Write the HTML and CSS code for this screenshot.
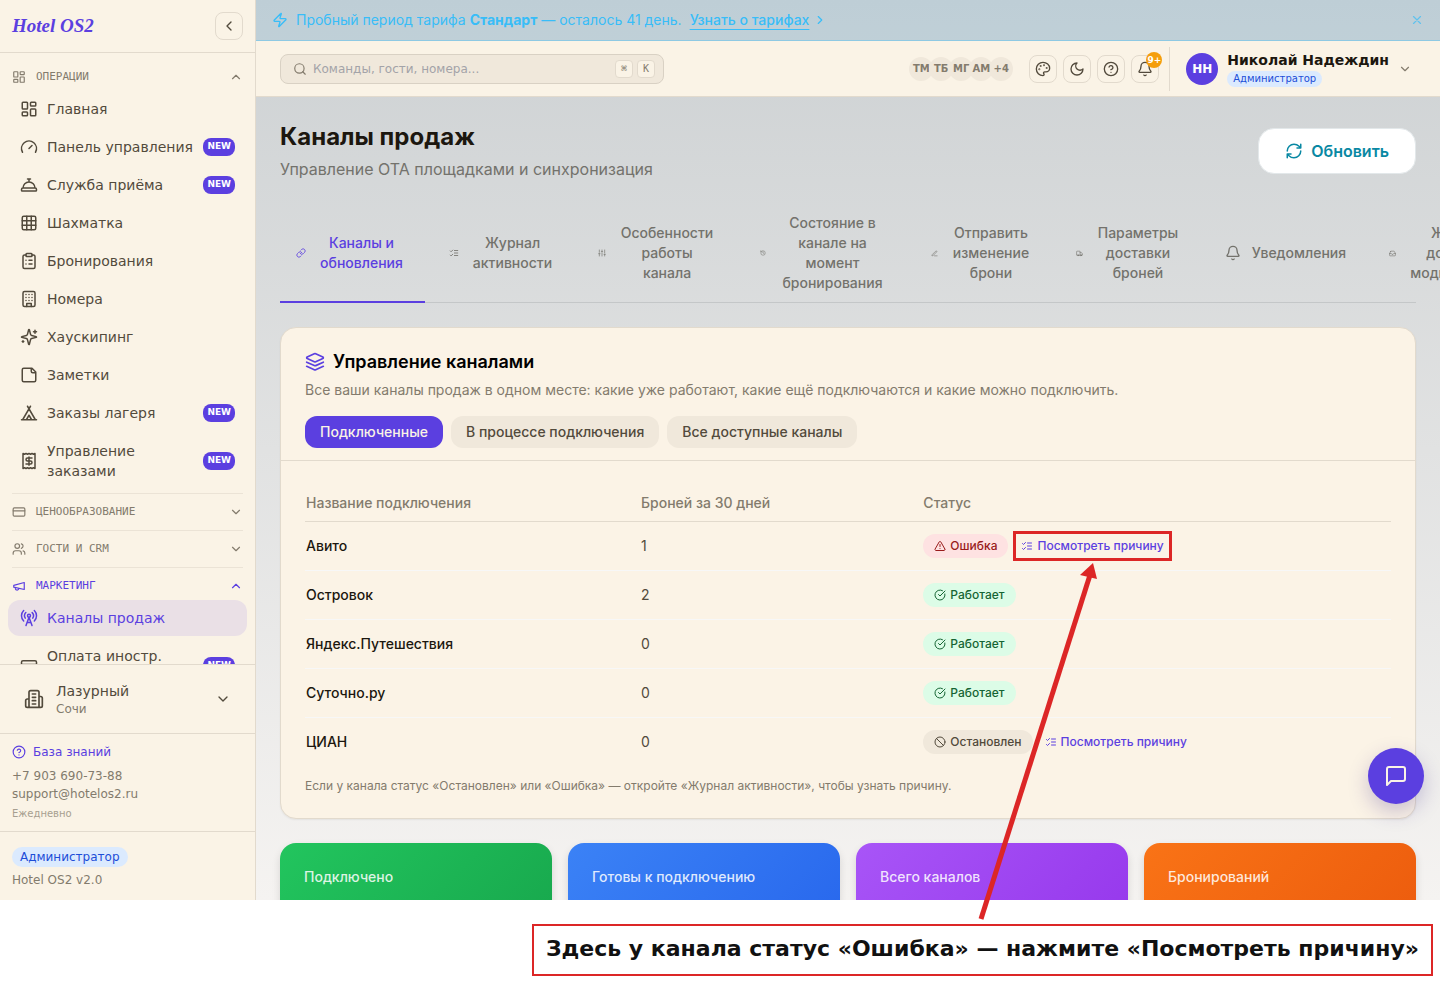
FILE: index.html
```html
<!DOCTYPE html>
<html lang="ru">
<head>
<meta charset="utf-8">
<title>Каналы продаж — Hotel OS2</title>
<link rel="stylesheet" href="styles.css">
</head>
<body>
<svg class="sprite" aria-hidden="true">
  <symbol id="dash" viewBox="0 0 24 24"><rect width="7" height="9" x="3" y="3" rx="1"/><rect width="7" height="5" x="14" y="3" rx="1"/><rect width="7" height="9" x="14" y="12" rx="1"/><rect width="7" height="5" x="3" y="16" rx="1"/></symbol>
  <symbol id="gauge" viewBox="0 0 24 24"><path d="m12 14 4-4M3.34 19a10 10 0 1 1 17.32 0"/></symbol>
  <symbol id="concierge" viewBox="0 0 24 24"><path d="M3 20a1 1 0 0 1-1-1v-1a2 2 0 0 1 2-2h16a2 2 0 0 1 2 2v1a1 1 0 0 1-1 1ZM20 16a8 8 0 1 0-16 0M12 4v4M10 4h4"/></symbol>
  <symbol id="grid" viewBox="0 0 24 24"><rect width="18" height="18" x="3" y="3" rx="2"/><path d="M3 9h18M3 15h18M9 3v18M15 3v18"/></symbol>
  <symbol id="clipboard" viewBox="0 0 24 24"><rect width="8" height="4" x="8" y="2" rx="1"/><path d="M16 4h2a2 2 0 0 1 2 2v14a2 2 0 0 1-2 2H6a2 2 0 0 1-2-2V6a2 2 0 0 1 2-2h2M12 11h4M12 16h4M8 11h.01M8 16h.01"/></symbol>
  <symbol id="building" viewBox="0 0 24 24"><rect width="16" height="20" x="4" y="2" rx="2"/><path d="M9 22v-4h6v4M8 6h.01M16 6h.01M12 6h.01M12 10h.01M12 14h.01M16 10h.01M16 14h.01M8 10h.01M8 14h.01"/></symbol>
  <symbol id="sparkles" viewBox="0 0 24 24"><path d="M9.937 15.5A2 2 0 0 0 8.5 14.063l-6.135-1.582a.5.5 0 0 1 0-.962L8.5 9.936A2 2 0 0 0 9.937 8.5l1.582-6.135a.5.5 0 0 1 .963 0L14.063 8.5A2 2 0 0 0 15.5 9.937l6.135 1.581a.5.5 0 0 1 0 .964L15.5 14.063a2 2 0 0 0-1.437 1.437l-1.582 6.135a.5.5 0 0 1-.963 0zM20 3v4M22 5h-4M4 17v2M5 18H3"/></symbol>
  <symbol id="note" viewBox="0 0 24 24"><path d="M16 3H5a2 2 0 0 0-2 2v14a2 2 0 0 0 2 2h14a2 2 0 0 0 2-2V8ZM15 3v4a2 2 0 0 0 2 2h4"/></symbol>
  <symbol id="tent" viewBox="0 0 24 24"><path d="M3.5 21 14 3M20.5 21 10 3M15.5 21 12 15l-3.500 6M2 21h20"/></symbol>
  <symbol id="receipt" viewBox="0 0 24 24"><path d="M4 2v20l2-1 2 1 2-1 2 1 2-1 2 1 2-1 2 1V2l-2 1-2-1-2 1-2-1-2 1-2-1-2 1ZM16 8h-6a2 2 0 1 0 0 4h4a2 2 0 1 1 0 4H8M12 17.500v-11"/></symbol>
  <symbol id="card" viewBox="0 0 24 24"><rect width="20" height="14" x="2" y="5" rx="2"/><path d="M2 10h20"/></symbol>
  <symbol id="users" viewBox="0 0 24 24"><path d="M16 21v-2a4 4 0 0 0-4-4H6a4 4 0 0 0-4 4v2M22 21v-2a4 4 0 0 0-3-3.870M16 3.130a4 4 0 0 1 0 7.750"/><circle cx="9" cy="7" r="4"/></symbol>
  <symbol id="megaphone" viewBox="0 0 24 24"><path d="m3 11 18-5v12L3 14v-3zM11.600 16.800a3 3 0 1 1-5.800-1.600"/></symbol>
  <symbol id="tower" viewBox="0 0 24 24"><path d="M4.900 16.100C1 12.200 1 5.800 4.900 1.900M7.800 4.700a6.140 6.140 0 0 0-.8 7.500M16.200 4.800c2 2 2.260 5.110.8 7.470M19.100 1.900a9.960 9.960 0 0 1 0 14.100M9.500 18h5M8 22l4-11 4 11"/><circle cx="12" cy="9" r="2"/></symbol>
  <symbol id="building2" viewBox="0 0 24 24"><path d="M6 22V4a2 2 0 0 1 2-2h8a2 2 0 0 1 2 2v18ZM6 12H4a2 2 0 0 0-2 2v6a2 2 0 0 0 2 2h2M18 9h2a2 2 0 0 1 2 2v9a2 2 0 0 1-2 2h-2M10 6h4M10 10h4M10 14h4M10 18h4"/></symbol>
  <symbol id="help" viewBox="0 0 24 24"><circle cx="12" cy="12" r="10"/><path d="M9.090 9a3 3 0 0 1 5.830 1c0 2-3 3-3 3M12 17h.01"/></symbol>
  <symbol id="zap" viewBox="0 0 24 24"><path d="M4 14a1 1 0 0 1-.78-1.630l9.900-10.200a.5.5 0 0 1 .86.460l-1.920 6.020A1 1 0 0 0 13 10h7a1 1 0 0 1 .78 1.630l-9.900 10.200a.5.5 0 0 1-.86-.460l1.920-6.020A1 1 0 0 0 11 14z"/></symbol>
  <symbol id="search" viewBox="0 0 24 24"><circle cx="11" cy="11" r="8"/><path d="m21 21-4.300-4.300"/></symbol>
  <symbol id="palette" viewBox="0 0 24 24"><circle cx="13.500" cy="6.500" r=".5"/><circle cx="17.500" cy="10.500" r=".5"/><circle cx="8.500" cy="7.500" r=".5"/><circle cx="6.500" cy="12.500" r=".5"/><path d="M12 2C6.500 2 2 6.500 2 12s4.500 10 10 10c.926 0 1.648-.746 1.648-1.688 0-.437-.18-.835-.437-1.125-.29-.289-.438-.652-.438-1.125a1.640 1.640 0 0 1 1.668-1.668h1.996c3.051 0 5.555-2.503 5.555-5.554C21.965 6.012 17.461 2 12 2z"/></symbol>
  <symbol id="moon" viewBox="0 0 24 24"><path d="M12 3a6 6 0 0 0 9 9 9 9 0 1 1-9-9Z"/></symbol>
  <symbol id="bell" viewBox="0 0 24 24"><path d="M10.268 21a2 2 0 0 0 3.464 0M3.262 15.326A1 1 0 0 0 4 17h16a1 1 0 0 0 .74-1.673C19.410 13.956 18 12.499 18 8A6 6 0 0 0 6 8c0 4.499-1.411 5.956-2.738 7.326"/></symbol>
  <symbol id="refresh" viewBox="0 0 24 24"><path d="M3 12a9 9 0 0 1 9-9 9.750 9.750 0 0 1 6.740 2.740L21 8M21 3v5h-5M21 12a9 9 0 0 1-9 9 9.750 9.750 0 0 1-6.740-2.740L3 16M8 16H3v5"/></symbol>
  <symbol id="layers" viewBox="0 0 24 24"><path d="m12.830 2.180a2 2 0 0 0-1.660 0L2.600 6.080a1 1 0 0 0 0 1.830l8.580 3.910a2 2 0 0 0 1.660 0l8.580-3.900a1 1 0 0 0 0-1.830ZM22 12.180l-9.170 4.160a2 2 0 0 1-1.660 0L2 12.180M22 17.180l-9.170 4.160a2 2 0 0 1-1.660 0L2 17.180"/></symbol>
  <symbol id="link" viewBox="0 0 24 24"><path d="M10 13a5 5 0 0 0 7.540.54l3-3a5 5 0 0 0-7.070-7.070l-1.720 1.710M14 11a5 5 0 0 0-7.540-.54l-3 3a5 5 0 0 0 7.070 7.070l1.710-1.710"/></symbol>
  <symbol id="checks" viewBox="0 0 24 24"><path d="m3 17 2 2 4-4M3 7l2 2 4-4M13 6h8M13 12h8M13 18h8"/></symbol>
  <symbol id="sliders" viewBox="0 0 24 24"><path d="M4 21v-7M4 10V3M12 21v-9M12 8V3M20 21v-5M20 12V3M2 14h4M10 8h4M18 16h4"/></symbol>
  <symbol id="history" viewBox="0 0 24 24"><path d="M3 12a9 9 0 1 0 9-9 9.750 9.750 0 0 0-6.740 2.740L3 8M3 3v5h5M12 7v5l4 2"/></symbol>
  <symbol id="pen" viewBox="0 0 24 24"><path d="M12 20h9M16.376 3.622a1 1 0 0 1 3.002 3.002L7.368 18.635a2 2 0 0 1-.855.506l-2.872.838a.5.5 0 0 1-.62-.62l.838-2.872a2 2 0 0 1 .506-.854z"/></symbol>
  <symbol id="truck" viewBox="0 0 24 24"><path d="M14 18V6a2 2 0 0 0-2-2H4a2 2 0 0 0-2 2v11a1 1 0 0 0 1 1h2M15 18H9M19 18h2a1 1 0 0 0 1-1v-3.650a1 1 0 0 0-.22-.624l-3.480-4.350A1 1 0 0 0 17.520 8H14"/><circle cx="17" cy="18" r="2"/><circle cx="7" cy="18" r="2"/></symbol>
  <symbol id="inbox" viewBox="0 0 24 24"><path d="M22 12h-6l-2 3h-4l-2-3H2M5.450 5.110 2 12v6a2 2 0 0 0 2 2h16a2 2 0 0 0 2-2v-6l-3.450-6.890A2 2 0 0 0 16.760 4H7.240a2 2 0 0 0-1.790 1.110z"/></symbol>
  <symbol id="alert" viewBox="0 0 24 24"><path d="m21.730 18-8-14a2 2 0 0 0-3.480 0l-8 14A2 2 0 0 0 4 21h16a2 2 0 0 0 1.730-3M12 9v4M12 17h.01"/></symbol>
  <symbol id="ok" viewBox="0 0 24 24"><path d="M21.801 10A10 10 0 1 1 17 3.335M9 11l3 3L22 4"/></symbol>
  <symbol id="ban" viewBox="0 0 24 24"><circle cx="12" cy="12" r="10"/><path d="m4.900 4.900 14.200 14.200"/></symbol>
  <symbol id="chat" viewBox="0 0 24 24"><path d="M21 15a2 2 0 0 1-2 2H7l-4 4V5a2 2 0 0 1 2-2h14a2 2 0 0 1 2 2z"/></symbol>
  <symbol id="x" viewBox="0 0 24 24"><path d="M18 6 6 18M6 6l12 12"/></symbol>
  <symbol id="down" viewBox="0 0 24 24"><path d="m6 9 6 6 6-6"/></symbol>
  <symbol id="up" viewBox="0 0 24 24"><path d="m18 15-6-6-6 6"/></symbol>
  <symbol id="left" viewBox="0 0 24 24"><path d="m15 18-6-6 6-6"/></symbol>
  <symbol id="right" viewBox="0 0 24 24"><path d="m9 18 6-6-6-6"/></symbol>
</svg>

<div class="app">
  <aside class="sidebar">
    <div class="brand">
      <a class="logo" href="#">Hotel OS2</a>
      <button class="square" aria-label="Свернуть меню"><svg class="i16"><use href="#left"/></svg></button>
    </div>
    <nav class="nav">
      <section class="group first">
        <button class="group-head"><svg class="i14"><use href="#dash"/></svg><span>ОПЕРАЦИИ</span><svg class="i14"><use href="#up"/></svg></button>
        <div class="items">
          <a class="item" href="#"><svg class="i18"><use href="#dash"/></svg><span>Главная</span></a>
          <a class="item" href="#"><svg class="i18"><use href="#gauge"/></svg><span>Панель управления</span><b class="new">NEW</b></a>
          <a class="item" href="#"><svg class="i18"><use href="#concierge"/></svg><span>Служба приёма</span><b class="new">NEW</b></a>
          <a class="item" href="#"><svg class="i18"><use href="#grid"/></svg><span>Шахматка</span></a>
          <a class="item" href="#"><svg class="i18"><use href="#clipboard"/></svg><span>Бронирования</span></a>
          <a class="item" href="#"><svg class="i18"><use href="#building"/></svg><span>Номера</span></a>
          <a class="item" href="#"><svg class="i18"><use href="#sparkles"/></svg><span>Хаускипинг</span></a>
          <a class="item" href="#"><svg class="i18"><use href="#note"/></svg><span>Заметки</span></a>
          <a class="item" href="#"><svg class="i18"><use href="#tent"/></svg><span>Заказы лагеря</span><b class="new">NEW</b></a>
          <a class="item" href="#"><svg class="i18"><use href="#receipt"/></svg><span>Управление<br>заказами</span><b class="new">NEW</b></a>
        </div>
      </section>
      <section class="group"><button class="group-head"><svg class="i14"><use href="#card"/></svg><span>ЦЕНООБРАЗОВАНИЕ</span><svg class="i14"><use href="#down"/></svg></button></section>
      <section class="group"><button class="group-head"><svg class="i14"><use href="#users"/></svg><span>ГОСТИ И CRM</span><svg class="i14"><use href="#down"/></svg></button></section>
      <section class="group">
        <button class="group-head current"><svg class="i14"><use href="#megaphone"/></svg><span>МАРКЕТИНГ</span><svg class="i14"><use href="#up"/></svg></button>
        <div class="items">
          <a class="item active" href="#"><svg class="i18"><use href="#tower"/></svg><span>Каналы продаж</span></a>
          <a class="item" href="#"><svg class="i18"><use href="#card"/></svg><span>Оплата иностр.<br>картами</span><b class="new">NEW</b></a>
        </div>
      </section>
    </nav>
    <button class="property">
      <svg class="i20"><use href="#building2"/></svg>
      <span class="property-text"><span>Лазурный</span><small>Сочи</small></span>
      <svg class="i16"><use href="#down"/></svg>
    </button>
    <div class="support">
      <a class="kb" href="#"><svg class="i14"><use href="#help"/></svg>База знаний</a>
      <a href="#">+7 903 690-73-88</a>
      <a href="#">support@hotelos2.ru</a>
      <small>Ежедневно</small>
    </div>
    <div class="version"><span class="role">Администратор</span><span>Hotel OS2 v2.0</span></div>
  </aside>

  <div class="main">
    <div class="banner">
      <svg class="i16"><use href="#zap"/></svg>
      <span>Пробный период тарифа <b>Стандарт</b> — осталось 41 день.</span>
      <a href="#">Узнать о тарифах</a><svg class="i14"><use href="#right"/></svg>
      <button class="close" aria-label="Закрыть"><svg class="i14"><use href="#x"/></svg></button>
    </div>
    <header class="topbar">
      <label class="search">
        <svg class="i14"><use href="#search"/></svg>
        <input type="text" placeholder="Команды, гости, номера..." aria-label="Поиск">
        <kbd>⌘</kbd><kbd>K</kbd>
      </label>
      <div class="team"><span>ТМ</span><span>ТБ</span><span>МГ</span><span class="over">АМ</span><span>+4</span></div>
      <div class="tools">
        <button class="square" aria-label="Тема"><svg class="i16"><use href="#palette"/></svg></button>
        <button class="square" aria-label="Ночной режим"><svg class="i16"><use href="#moon"/></svg></button>
        <button class="square" aria-label="Помощь"><svg class="i16"><use href="#help"/></svg></button>
        <button class="square" aria-label="Уведомления"><svg class="i16"><use href="#bell"/></svg><span class="count">9+</span></button>
      </div>
      <button class="user">
        <span class="avatar">НН</span>
        <span class="user-text"><strong>Николай Надеждин</strong><span class="role small">Администратор</span></span>
        <svg class="i14"><use href="#down"/></svg>
      </button>
    </header>

    <main class="page">
      <div class="page-head">
        <div><h1>Каналы продаж</h1><p>Управление ОТА площадками и синхронизация</p></div>
        <button class="refresh"><svg class="i18"><use href="#refresh"/></svg>Обновить</button>
      </div>

      <nav class="tabs">
        <a class="tab t1 on" href="#"><svg class="s10"><use href="#link"/></svg><span>Каналы и обновления</span></a>
        <a class="tab t2" href="#"><svg class="s10"><use href="#checks"/></svg><span>Журнал активности</span></a>
        <a class="tab t3" href="#"><svg class="s8"><use href="#sliders"/></svg><span>Особенности<br>работы<br>канала</span></a>
        <a class="tab t4" href="#"><svg class="s6"><use href="#history"/></svg><span>Состояние в канале на момент бронирования</span></a>
        <a class="tab t5" href="#"><svg class="s7"><use href="#pen"/></svg><span>Отправить изменение брони</span></a>
        <a class="tab t6" href="#"><svg class="s7"><use href="#truck"/></svg><span>Параметры доставки броней</span></a>
        <a class="tab t7" href="#"><svg class="i16"><use href="#bell"/></svg><span>Уведомления</span></a>
        <a class="tab t8" href="#"><svg class="s7"><use href="#inbox"/></svg><span>Журнал доставки модификаций</span></a>
      </nav>

      <section class="card">
        <div class="card-head">
          <h2><svg class="i20"><use href="#layers"/></svg>Управление каналами</h2>
          <p>Все ваши каналы продаж в одном месте: какие уже работают, какие ещё подключаются и какие можно подключить.</p>
          <div class="chips"><button class="chip on">Подключенные</button><button class="chip">В процессе подключения</button><button class="chip">Все доступные каналы</button></div>
        </div>
        <div class="card-body">
          <table class="channels">
            <thead><tr><th class="c-name">Название подключения</th><th class="c-count">Броней за 30 дней</th><th>Статус</th></tr></thead>
            <tbody>
              <tr><td>Авито</td><td>1</td><td><div class="state"><span class="pill bad"><svg class="i12"><use href="#alert"/></svg>Ошибка</span><a class="why marked" href="#"><svg class="i12"><use href="#checks"/></svg>Посмотреть причину</a></div></td></tr>
              <tr><td>Островок</td><td>2</td><td><div class="state"><span class="pill good"><svg class="i12"><use href="#ok"/></svg>Работает</span></div></td></tr>
              <tr><td>Яндекс.Путешествия</td><td>0</td><td><div class="state"><span class="pill good"><svg class="i12"><use href="#ok"/></svg>Работает</span></div></td></tr>
              <tr><td>Суточно.ру</td><td>0</td><td><div class="state"><span class="pill good"><svg class="i12"><use href="#ok"/></svg>Работает</span></div></td></tr>
              <tr><td>ЦИАН</td><td>0</td><td><div class="state"><span class="pill off"><svg class="i12"><use href="#ban"/></svg>Остановлен</span><a class="why" href="#"><svg class="i12"><use href="#checks"/></svg>Посмотреть причину</a></div></td></tr>
            </tbody>
          </table>
          <p class="hint">Если у канала статус «Остановлен» или «Ошибка» — откройте «Журнал активности», чтобы узнать причину.</p>
        </div>
      </section>

      <div class="stats">
        <div class="stat green">Подключено</div>
        <div class="stat blue">Готовы к подключению</div>
        <div class="stat purple">Всего каналов</div>
        <div class="stat orange">Бронирований</div>
      </div>
    </main>
    <button class="chat" aria-label="Чат"><svg class="i24"><use href="#chat"/></svg></button>
  </div>
</div>

<div class="caption"><p>Здесь у канала статус «Ошибка» — нажмите «Посмотреть причину»</p></div>
<svg class="arrow" width="120" height="360" viewBox="0 0 120 360" aria-hidden="true"><path class="shaft" d="M3 356 112 12"/><path class="head" d="M115 0 102 12 119 16Z"/></svg>
</body>
</html>
```
FILE: styles.css
```css
* { box-sizing: border-box; }
:root {
  --cream: #faf3e6;
  --sand: #f0e8db;
  --line: #e2dacd;
  --ink: #524a3c;
  --muted: #837b6d;
  --violet: #5b3fe0;
  --red: #dc2626;
}
body { margin: 0; height: 100vh; display: flex; flex-direction: column; position: relative; background: #fff; color: var(--ink); font: 14px/20px Inter, "DejaVu Sans", sans-serif; overflow: hidden; }
h1, h2, p { margin: 0; }
a { color: inherit; text-decoration: none; }
button { font: inherit; color: inherit; background: none; border: 0; padding: 0; cursor: pointer; }
svg { fill: none; stroke: currentColor; stroke-width: 2; stroke-linecap: round; stroke-linejoin: round; flex: none; }
.sprite { position: absolute; width: 0; height: 0; }
.s6 { width: 6px; height: 6px; }
.s7 { width: 7px; height: 7px; }
.s8 { width: 8px; height: 8px; }
.s10 { width: 10px; height: 10px; }
.i12 { width: 12px; height: 12px; }
.i14 { width: 14px; height: 14px; }
.i16 { width: 16px; height: 16px; }
.i18 { width: 18px; height: 18px; }
.i20 { width: 20px; height: 20px; }
.i24 { width: 24px; height: 24px; }

.app { flex: 1; min-height: 0; display: flex; overflow: hidden; }

/* Sidebar */
.sidebar { flex: 0 0 256px; display: flex; flex-direction: column; background: var(--cream); border-right: 1px solid var(--line); font-family: "DejaVu Sans", sans-serif; }
.brand { display: flex; align-items: center; justify-content: space-between; padding: 12px; border-bottom: 1px solid var(--line); }
.logo { font: italic bold 19px/28px "Liberation Serif", serif; color: var(--violet); }
.square { position: relative; width: 28px; height: 28px; display: grid; place-items: center; border: 1px solid var(--line); border-radius: 8px; }
.nav { flex: 1; min-height: 0; overflow: hidden; padding: 5px 8px 0; }
.group { padding-bottom: 4px; }
.group-head { display: flex; align-items: center; gap: 10px; width: calc(100% - 8px); height: 33px; margin: 0 4px; padding-top: 3px; border-top: 1px solid #ebe3d6; color: var(--muted); font: 11px/16px "DejaVu Sans Mono", monospace; text-align: left; }
.first .group-head { border-color: transparent; }
.group-head span { flex: 1; }
.group-head.current { color: var(--violet); }
.items { display: flex; flex-direction: column; gap: 2px; }
.item { display: flex; align-items: center; gap: 9px; padding: 8px 12px; border-radius: 12px; }
.item span { flex: 1; min-width: 0; white-space: nowrap; }
.item.active { background: #eae0e6; color: var(--violet); }
.new { padding: 1px 4px 3px; border-radius: 8px; background: var(--violet); color: #fff; font-size: 9px; line-height: 14px; }
.property { display: flex; align-items: center; gap: 12px; padding: 16px 24px; border-top: 1px solid var(--line); text-align: left; }
.property-text { flex: 1; display: grid; }
.property small, .support, .version { color: var(--muted); font-size: 12px; line-height: 16px; }
.support { display: grid; gap: 2px; padding: 10px 12px 9px; border-top: 1px solid var(--line); }
.support .kb { display: flex; gap: 7px; align-items: center; color: var(--violet); margin-bottom: 6px; }
.support small { color: #a79f90; font-size: 10px; line-height: 16px; margin-top: 2px; }
.version { display: grid; gap: 5px; justify-items: start; padding: 15px 12px 12px; border-top: 1px solid var(--line); }
.role { padding: 2px 8px; border-radius: 10px; background: #dbeafe; color: #1d4ed8; font-size: 12px; line-height: 16px; }
.role.small { padding: 0 6px; font-size: 10px; }

/* Main column */
.main { position: relative; flex: 1; min-width: 0; display: flex; flex-direction: column; overflow: hidden; background: linear-gradient(#cdd1d3, #f5f3f1); }
.banner { flex: none; display: flex; align-items: center; padding: 10px 16px; background: rgba(56, 189, 248, .1); border-bottom: 1px solid #8ec9e3; color: #38bdf8; }
.banner span { margin: 0 8px; }
.banner a { font-weight: 500; text-decoration: underline; text-underline-offset: 4px; margin-right: 4px; }
.close { margin-left: auto; display: grid; opacity: .7; }
.topbar { flex: none; display: flex; align-items: center; height: 56px; padding: 0 24px; background: var(--cream); border-bottom: 1px solid var(--line); font-family: "DejaVu Sans", sans-serif; }
.search { display: flex; align-items: center; gap: 4px; width: 384px; height: 30px; padding: 0 8px 0 12px; border: 1px solid #d9d1c4; border-radius: 8px; background: var(--sand); color: var(--muted); }
.search input { flex: 1; min-width: 0; padding: 0 2px; border: 0; outline: 0; background: none; font: 12px/16px "DejaVu Sans", sans-serif; }
.search input::placeholder { color: #a3a3a8; }
kbd { width: 18px; border: 1px solid var(--line); border-radius: 4px; background: var(--cream); font: 10px/16px "DejaVu Sans Mono", monospace; text-align: center; }
.team { display: flex; margin-left: auto; margin-right: 16px; }
.team span { width: 24px; height: 24px; border-radius: 50%; background: var(--sand); color: var(--muted); font-size: 10px; font-weight: 700; line-height: 24px; text-align: center; }
.team span + span { margin-left: -4px; }
.team .over { position: relative; z-index: 1; }
.tools { display: flex; gap: 6px; }
.count { position: absolute; top: -4px; right: -4px; width: 16px; height: 16px; border-radius: 50%; background: #f59e0b; color: #fff; font-size: 9px; font-weight: 700; line-height: 16px; text-align: center; }
.user { display: flex; align-items: center; gap: 9px; height: 44px; margin-left: 10px; padding: 0 4px 0 16px; border-left: 1px solid var(--line); text-align: left; }
.user svg { color: var(--muted); }
.avatar { width: 32px; height: 32px; border-radius: 50%; background: var(--violet); color: #fff; font-size: 12px; font-weight: 700; line-height: 32px; text-align: center; }
.user-text { display: grid; gap: 2px; justify-items: start; }
.user-text strong { color: #1c170f; line-height: 18px; }

.page { padding: 24px; display: flex; flex-direction: column; gap: 24px; }
.page-head { display: flex; align-items: center; justify-content: space-between; }
.page-head h1 { color: #1c170f; font-size: 24px; line-height: 32px; }
.page-head p { margin-top: 4px; color: #73726c; font-size: 16px; line-height: 24px; }
.refresh { display: flex; align-items: center; gap: 8px; padding: 10px 26px; border: 1px solid #e3e8ea; border-radius: 16px; background: #fff; color: #0888a3; font-size: 16px; font-weight: 600; line-height: 24px; }

.tabs { display: flex; gap: 8px; border-bottom: 1px solid #c4c7c8; }
.tab { display: flex; align-items: center; gap: 8px; padding: 8px 16px; margin-bottom: -1px; border-bottom: 2px solid transparent; color: #73726c; font-weight: 500; text-align: center; }
.tab span { flex: 1; }
.tab.on { color: var(--violet); border-color: var(--violet); }
.t1 { flex: 0 0 145px; }
.t2 { flex: 0 0 141px; }
.t3 { flex: 0 0 154px; }
.t4 { flex: 0 0 163px; }
.t5 { flex: 0 0 137px; }
.t6 { flex: 0 0 141px; }
.t7 { flex: 0 0 156px; }
.t8 { flex: 0 0 156px; }

.card { border: 1px solid var(--line); border-radius: 16px; background: #fbf3e6; box-shadow: 0 1px 2px rgba(0, 0, 0, .06); }
.card-head { padding: 20px 24px 12px; border-bottom: 1px solid var(--line); }
.card-head h2 { display: flex; align-items: center; gap: 8px; color: #000; font-size: 18px; font-weight: 600; line-height: 28px; }
.card-head h2 svg { color: var(--violet); }
.card-head p { margin-top: 4px; color: var(--muted); }
.chips { display: flex; gap: 8px; margin-top: 16px; }
.chip { padding: 6px 15px; border-radius: 12px; background: var(--sand); font-weight: 500; }
.chip.on { background: var(--violet); color: #faf3e6; }
.card-body { padding: 24px; }
.channels { width: 100%; table-layout: fixed; border-collapse: separate; border-spacing: 0; }
.c-name { width: 335px; }
.c-count { width: 26%; }
th { height: 37px; padding: 0 1px; color: var(--muted); font-weight: 500; text-align: left; border-bottom: 1px solid var(--line); }
td { height: 49px; padding: 0 1px; border-bottom: 1px solid #f7f7f7; }
td:first-child { color: #1c170f; font-weight: 500; }
tbody tr:last-child td { height: 48px; border: 0; }
.state { display: flex; align-items: center; gap: 10px; font-size: 12px; line-height: 16px; font-weight: 500; }
.pill { display: flex; align-items: center; gap: 4px; padding: 4px 11px; border-radius: 12px; }
.bad { background: #fee2e2; color: #991b1b; }
.good { background: #dcfce7; color: #166534; }
.off { background: var(--sand); color: var(--ink); }
.why { display: flex; align-items: center; gap: 4px; padding: 4px 2px; color: var(--violet); }
.marked { outline: 3px solid var(--red); outline-offset: 0; padding: 4px 5px; margin-left: -2px; }
.hint { margin-top: 12px; color: var(--muted); font-size: 12px; line-height: 16px; }

.stats { display: grid; grid-template-columns: repeat(4, 1fr); gap: 16px; }
.stat { min-height: 140px; padding: 24px; border-radius: 16px; color: rgba(255, 255, 255, .85); font-weight: 500; box-shadow: 0 4px 8px rgba(0, 0, 0, .12); }
.green { background: linear-gradient(135deg, #22c55e, #16a34a); }
.blue { background: linear-gradient(135deg, #3b82f6, #2563eb); }
.purple { background: linear-gradient(135deg, #a855f7, #9333ea); }
.orange { background: linear-gradient(135deg, #f97316, #ea580c); }
.chat { position: absolute; right: 16px; bottom: 96px; width: 56px; height: 56px; display: grid; place-items: center; border-radius: 50%; background: var(--violet); color: #faf3e6; box-shadow: 0 8px 20px rgba(60, 40, 140, .25); }

/* Annotation */
.caption { display: flex; justify-content: flex-end; padding: 24px 7px 23px; }
.caption p { padding: 7px 12px 9px; border: 2px solid var(--red); color: #111; font: bold 22px/32px "DejaVu Sans", sans-serif; white-space: nowrap; }
.arrow { position: absolute; left: 978px; top: 563px; }
.arrow .shaft { stroke: var(--red); stroke-width: 5; stroke-linecap: butt; }
.arrow .head { fill: var(--red); stroke: none; }
```
